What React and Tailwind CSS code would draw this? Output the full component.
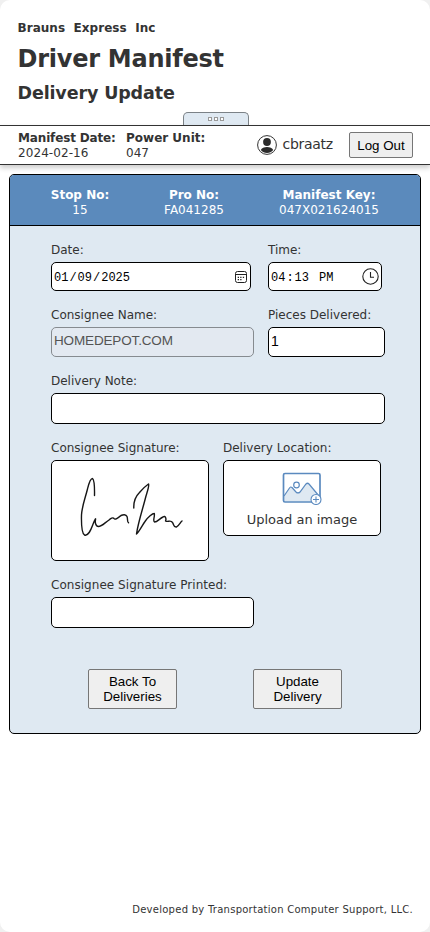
import React from "react";

const dv = "font-['DejaVu_Sans',Verdana,sans-serif]";
const mono = "font-['Liberation_Mono',monospace]";
const arial = "font-['Liberation_Sans',Arial,sans-serif]";

function Label({ children, className = "" }) {
  return (
    <div className={`h-[15px] whitespace-nowrap text-[12px] leading-[17px] text-[#333] ${className}`}>
      {children}
    </div>
  );
}

function HeaderCell({ title, value, className }) {
  return (
    <div className={`flex flex-col items-center whitespace-nowrap text-[12px] leading-[15px] text-white ${className}`}>
      <span className="font-bold">{title}</span>
      <span>{value}</span>
    </div>
  );
}

function UserIcon() {
  return (
    <svg width="20" height="20" viewBox="0 0 20 20" className="block">
      <circle cx="10" cy="10" r="9.4" fill="#fff" stroke="#333" strokeWidth="1" />
      <circle cx="10" cy="7" r="3.9" fill="#2b2b2b" />
      <path d="M3.8 15C5.2 11 14.8 11 16.2 15C14.8 17 12.5 18 10 18S5.200 17 3.800 15Z" fill="#2b2b2b" />
    </svg>
  );
}

function CalendarIcon() {
  return (
    <svg width="12" height="12" viewBox="0 0 12 12" fill="none" stroke="#222" className="block">
      <rect x="0.5" y="0.5" width="11" height="11" rx="2" />
      <path d="M0.5 3.500H11.500" />
      <path d="M5.200 6.400H6.500M7.800 6.400H9.100M2.700 8.700H4M5.200 8.700H6.500M2.700 6.400H4" strokeWidth="1.200" />
    </svg>
  );
}

function ClockIcon() {
  return (
    <svg width="17" height="17" viewBox="0 0 17 17" fill="none" stroke="#222" strokeWidth="1.1" className="block">
      <circle cx="8.5" cy="8.5" r="7.7" />
      <path d="M8.500 4V9.200H12" />
    </svg>
  );
}

function Signature() {
  return (
    <svg width="156" height="99" viewBox="0 0 156 99" fill="none" stroke="#161616" strokeWidth="1.4" strokeLinecap="round" strokeLinejoin="round" className="block">
      <path d="M42.500 34.500C42.600 29 42.500 19 40.500 17.500C38 17.500 36.500 24 35.500 28C33 38 30 45 29.500 54C29.300 62 29.500 72 32.500 74C37 75.500 39.500 67 41.500 62C42.500 59.500 44 56.500 43.500 58.500C43 61 43.500 65.500 46.500 65.500C50 65.500 53 61.500 57 59C58.500 57.500 61 56 62 57.500C63 59.500 66.500 56.500 69 54.500C71 53.500 74 53 75 55.500C76 58 75 61.500 76.500 61.800" />
      <path d="M81.800 47C81.500 40 84 35 87.500 31.500C90.500 28 93.500 25 96.500 23C97.500 24.500 95.500 30 94 35C91 47 86 62 84.500 73C87 71 90.500 64 93 60.500C96 56 100.500 52.500 102.300 52.500C103 56 100.500 59.500 102.500 61C105.500 61 107.500 57.500 111 56C113.500 54 114.500 58 113.500 60C116 61.500 118.500 58.500 120.500 61.500C122 63.500 121.500 66.500 124.500 66C127 64.500 128.500 61 130 60" />
    </svg>
  );
}

function ImageIcon() {
  return (
    <svg width="40" height="33" viewBox="0 0 40 33" fill="none" stroke="#5b8abf" className="block">
      <path d="M2 24L7.500 16Q8.500 14.300 10 15.500L14 20Q16 22 18 20L24 12Q25.500 10.500 27 12L37 24V29.500H2Z" fill="#dfe9f2" stroke="none" />
      <rect x="1.500" y="1.500" width="36.500" height="28.500" rx="1.500" strokeWidth="1.700" />
      <path d="M2 24L7.500 16Q8.500 14.300 10 15.500L14 20Q16 22 18 20L24 12Q25.500 10.500 27 12L37 24" strokeWidth="1.200" />
      <circle cx="14.500" cy="13" r="2.800" fill="#fff" strokeWidth="1.200" />
      <circle cx="34" cy="27.500" r="5" fill="#fff" strokeWidth="1.100" />
      <path d="M34 24.500V30.500M31 27.500H37" strokeWidth="1.100" />
    </svg>
  );
}

const box = "rounded-[5px] border border-black bg-white";
const btn = `rounded-[2px] border border-[#767676] bg-[#efefef] text-black text-center text-[13.33px] ${arial}`;

export default function App() {
  return (
    <div className="bg-[#f0f0f0]">
      <div className={`flex h-[932px] w-[430px] flex-col overflow-hidden rounded-[10px] bg-white text-[#333] ${dv}`}>
        <header className="flex h-[125px] flex-col pl-[17.5px] whitespace-nowrap">
          <div className="mt-[20px] h-[16px] text-[12px] leading-[16px] font-bold tracking-[0.04px] whitespace-pre">Brauns  Express  Inc</div>
          <h1 className="mt-[7px] h-[32px] text-[24px] leading-[33px] font-bold tracking-[-0.25px]">Driver Manifest</h1>
          <h2 className="mt-[6px] h-[24px] text-[17.5px] leading-[24px] font-bold tracking-[-0.13px]">Delivery Update</h2>
          <div className="mt-[7px] ml-[165.5px] flex h-[13px] w-[66px] justify-center gap-[2px] rounded-t-[5px] border border-b-0 border-[#7b8287] bg-[#dfe9f2] pt-[4px]">
            <i className="h-[4px] w-[4px] border border-[#999] bg-white" />
            <i className="h-[4px] w-[4px] border border-[#999] bg-white" />
            <i className="h-[4px] w-[4px] border border-[#999] bg-white" />
          </div>
        </header>
        <div className="flex h-[40px] shrink-0 border-y border-[#333] pl-[18px] whitespace-nowrap shadow-[0_3px_5px_rgba(0,0,0,0.2)]">
          <div className="w-[108px] pt-[5px] text-[12px] leading-[15px]">
            <div className="font-bold tracking-[-0.15px]">Manifest Date:</div>
            <div className="tracking-[0.08px]">2024-02-16</div>
          </div>
          <div className="w-[131px] pt-[5px] text-[12px] leading-[15px]">
            <div className="font-bold">Power Unit:</div>
            <div>047</div>
          </div>
          <div className="pt-[9px]"><UserIcon /></div>
          <div className="ml-[5.5px] w-[66.5px] pt-[8px] text-[14px] leading-[20px] tracking-[-0.3px]">cbraatz</div>
          <button className={`mt-[6px] h-[26px] w-[64px] pt-[1px] ${btn}`}>Log Out</button>
        </div>

        <main className="mt-[9px] ml-[9px] flex h-[560px] w-[412px] flex-col overflow-hidden rounded-[5px] border border-black bg-[#dfe9f2]">
          <div className="flex h-[51px] shrink-0 border-b border-black bg-[#5b8abc] pt-[13px]">
            <HeaderCell title="Stop No:" value="15" className="ml-[20px] w-[100px]" />
            <HeaderCell title="Pro No:" value="FA041285" className="ml-[14px] w-[100px]" />
            <HeaderCell title="Manifest Key:" value="047X021624015" className="ml-[25px] w-[120px]" />
          </div>
          <div className="flex flex-col pl-[41px]">
            <div className="mt-[16px] flex">
              <div className="w-[217px]">
                <Label>Date:</Label>
                <div className={`mt-[5px] flex h-[29px] w-[200px] items-center justify-between pr-[3px] pl-[2px] ${box}`}>
                  <span className={`flex pt-[2px] text-[12px] leading-[16px] text-black ${mono}`}>
                    <span>01</span><span className="px-[1px]">/</span><span>09</span><span className="px-[1px]">/</span><span>2025</span>
                  </span>
                  <CalendarIcon />
                </div>
              </div>
              <div>
                <Label>Time:</Label>
                <div className={`mt-[5px] flex h-[29px] w-[114px] items-center justify-between pr-[2px] pl-[2px] ${box}`}>
                  <span className={`flex pt-[2px] text-[12px] leading-[16px] text-black ${mono}`}>
                    <span>04</span><span className="px-[1px]">:</span><span>13</span><span className="ml-[10px]">PM</span>
                  </span>
                  <ClockIcon />
                </div>
              </div>
            </div>
            <div className="mt-[16px] flex">
              <div className="w-[217px]">
                <Label>Consignee Name:</Label>
                <div className={`mt-[5px] flex h-[30px] w-[203px] items-center rounded-[5px] border border-[#868b90] bg-[#e3e9f1] pb-[1px] pl-[2px] text-[13.5px] tracking-[-0.15px] text-[#545454] ${arial}`}>HOMEDEPOT.COM</div>
              </div>
              <div>
                <Label>Pieces Delivered:</Label>
                <div className={`mt-[5px] flex h-[30px] w-[117px] items-center pb-[1px] pl-[2px] text-[14px] text-black ${box} ${arial}`}>1</div>
              </div>
            </div>
            <Label className="mt-[16px]">Delivery Note:</Label>
            <div className={`mt-[5px] h-[31px] w-[334px] ${box}`} />
            <div className="mt-[16px] flex gap-[14px]">
              <div className="w-[158px]">
                <Label>Consignee Signature:</Label>
                <div className={`mt-[5px] h-[101px] ${box}`}><Signature /></div>
              </div>
              <div className="w-[158px]">
                <Label>Delivery Location:</Label>
                <div className={`mt-[5px] flex h-[76px] flex-col items-center pt-[11px] ${box}`}>
                  <ImageIcon />
                  <span className="mt-[6px] text-[13px] leading-[18px] whitespace-nowrap">Upload an image</span>
                </div>
              </div>
            </div>
            <Label className="mt-[16px] tracking-[0.04px]">Consignee Signature Printed:</Label>
            <div className={`mt-[5px] h-[31px] w-[203px] ${box}`} />
            <div className="mt-[41px] ml-[37px] flex gap-[76px]">
              <button className={`h-[40px] w-[89px] leading-[15px] ${btn}`}>Back To<br />Deliveries</button>
              <button className={`h-[40px] w-[89px] leading-[15px] ${btn}`}>Update<br />Delivery</button>
            </div>
          </div>
        </main>
        <footer className="mt-auto mb-[15px] pr-[17px] text-right text-[10px] leading-[14px] tracking-[0.26px]">Developed by Transportation Computer Support, LLC.</footer>
      </div>
    </div>
  );
}
